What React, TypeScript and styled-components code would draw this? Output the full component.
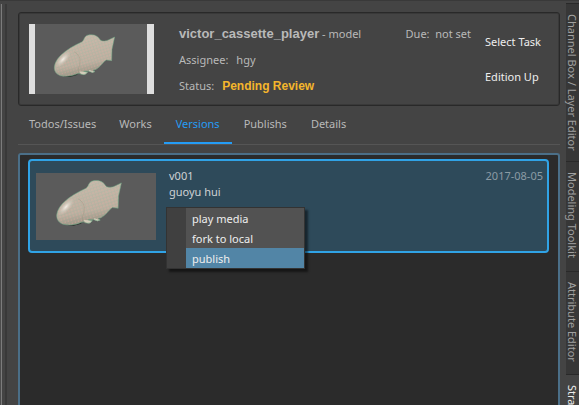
import React, { useState } from "react";
import styled, { createGlobalStyle } from "styled-components";

const GlobalStyle = createGlobalStyle`
  * { box-sizing: border-box; }
  body {
    margin: 0;
    background: #444444;
    color: #b9b9b9;
    font: 11px/16px "Noto Sans", "Open Sans", sans-serif;
  }
  button {
    font: inherit;
    color: inherit;
    background: none;
    border: 0;
    padding: 0;
    text-align: left;
    white-space: nowrap;
  }
  h1, h2, p, dl, dd, dt, ul { margin: 0; padding: 0; font: inherit; }
`;

const Window = styled.div`
  display: flex;
  height: 100vh;
  overflow: hidden;
  border-top: 1px solid #393939;
`;

const DockEdge = styled.div`
  flex: 0 0 7px;
  margin-top: 3px;
  border-left: 1px solid #4c4c4c;
  border-right: 2px solid #393939;
  box-shadow: inset 1px 0 #7c7c7c;
`;

const Main = styled.main`
  flex: 1;
  min-width: 0;
  display: flex;
  flex-direction: column;
  padding: 11px 6px 0 11px;
`;

const TaskCard = styled.section`
  display: flex;
  flex-shrink: 0;
  height: 94px;
  padding: 11px 10px;
  border: 1px solid #292929;
  border-radius: 3px;
  box-shadow: inset 0 0 0 1px #393939;
`;

const TaskThumb = styled.div`
  flex: 0 0 125px;
  height: 70px;
  border-left: 6px solid #dedede;
  border-right: 7px solid #dedede;
`;

const Picture = styled.svg`
  display: block;
  width: 100%;
  height: 100%;
`;

const TaskInfo = styled.div`
  flex: 1;
  min-width: 0;
  padding-left: 25px;
`;

const TitleRow = styled.div`
  display: flex;
  justify-content: space-between;
  height: 25px;
  padding-top: 2px;
  white-space: nowrap;
`;

const TaskName = styled.h1`
  strong {
    font: bold 13px/16px "Liberation Sans", Arial, sans-serif;
  }
`;

const Due = styled.p`
  padding-right: 14px;
  white-space: pre;
`;

const Field = styled.dl`
  display: flex;
  gap: 8px;
  height: 26px;
  padding-top: 3px;
`;

const Status = styled.dd`
  && { font: bold 12px/16px "Liberation Sans", Arial, sans-serif; }
  color: #f4b62c;
`;

const TaskActions = styled.div`
  flex: 0 0 64px;
  display: flex;
  flex-direction: column;
  gap: 19px;
  padding-top: 10px;
  color: #eeeeee;
`;

const Tabs = styled.div`
  display: flex;
  flex-shrink: 0;
  height: 39px;
  border-bottom: 1px solid #555555;
`;

const Tab = styled.button<{ $active: boolean }>`
  padding: 0 12px;
  color: ${(p) => (p.$active ? "#249cf5" : "#b9b9b9")};
  border-bottom: 2px solid ${(p) => (p.$active ? "#249cf5" : "transparent")};

  &:first-child { padding: 0 11px; }
`;

const VersionList = styled.section`
  flex: 1;
  margin-top: 8px;
  padding: 4px 9px 4px 8px;
  background: #2b2b2b;
  border: 2px solid #4b6f88;
  border-bottom: 0;
  border-radius: 3px 3px 0 0;
`;

const VersionCard = styled.article`
  position: relative;
  display: flex;
  height: 94px;
  padding: 12px 4px 0 6px;
  background: #2e4a5a;
  border: 2px solid #30a3e6;
  border-radius: 4px;
`;

const VersionThumb = styled.div`
  flex: 0 0 120px;
  height: 67px;
`;

const VersionText = styled.div`
  flex: 1;
  padding-left: 13px;
  margin-top: -5px;
  color: #cfd2d4;
`;

const VersionDate = styled.time`
  margin-top: -5px;
  color: #8b9ba4;
`;

const Menu = styled.div`
  position: absolute;
  left: 136px;
  top: 46px;
  width: 139px;
  padding-left: 19px;
  background: #404040;
  border: 1px solid #333333;
  box-shadow: 3px 3px 2px rgba(0, 0, 0, 0.5);
`;

const MenuItem = styled.button<{ $active: boolean }>`
  display: block;
  width: 100%;
  height: 20px;
  padding: 2px 0 0 6px;
  color: #eeeeee;
  background: ${(p) => (p.$active ? "#5285a6" : "#525252")};
`;

const SideTabs = styled.nav`
  flex: 0 0 13px;
  margin-top: 2px;
  display: flex;
  flex-direction: column;
  background: #373737;
`;

const SideTab = styled.button<{ $height: number; $active?: boolean }>`
  flex: 0 0 ${(p) => p.$height}px;
  writing-mode: vertical-rl;
  width: 13px;
  line-height: 13px;
  padding-top: 10px;
  color: ${(p) => (p.$active ? "#eeeeee" : "#a0a0a0")};
  background: ${(p) => (p.$active ? "#444444" : "#373737")};
  border-top: 1px solid #292929;
`;

function FishPicture() {
  const id = React.useId();
  const outline =
    "M58 134C57 122 64 106 78 93C95 77 117 64 140 54C146 51 146 43 151 38C155 33 161 32 169 32C182 32 190 38 196 48C202 53 213 51 220 48L239 39L231 76L230 110L214 108C206 112 198 127 186 134C182 137 178 138 174 139L180 143L172 145L162 142L146 142L158 145L150 151C144 153 137 151 132 148L123 151C110 157 90 158 76 155C65 151 59 144 58 134Z";
  return (
    <Picture viewBox="0 0 336 210" preserveAspectRatio="xMidYMid slice" role="img" aria-label="Fish model">
      <defs>
        <linearGradient id={id + "body"} x1="0.35" y1="0.1" x2="0.6" y2="1">
          <stop offset="0" stopColor="#c4baab" />
          <stop offset="0.65" stopColor="#bcb0a1" />
          <stop offset="1" stopColor="#938b7d" />
        </linearGradient>
        <radialGradient id={id + "shine"}>
          <stop offset="0" stopColor="#f4efe6" />
          <stop offset="1" stopColor="#cfc5b8" stopOpacity="0" />
        </radialGradient>
        <pattern id={id + "mesh"} width="9" height="9" patternUnits="userSpaceOnUse" patternTransform="rotate(-18)">
          <path d="M0 0H9M0 0V9" stroke="#83b591" strokeWidth="1.5" opacity="0.35" />
          <circle cx="5" cy="5" r="2" fill="#dfa99b" opacity="0.45" />
        </pattern>
      </defs>
      <rect width="336" height="210" fill="#5b5b5b" />
      <path d="M82 156L105 159L126 153L134 143L110 151ZM166 139L174 141L188 130Z" fill="#252b27" />
      <path d={outline} fill={`url(#${id}body)`} />
      <path d={outline} fill={`url(#${id}mesh)`} />
      <ellipse cx="84" cy="106" rx="13" ry="32" transform="rotate(43 84 106)" fill={`url(#${id}shine)`} />
      <path d="M117 83C132 91 138 104 134 121C131 134 127 141 132 146" fill="none" stroke="#918b75" strokeWidth="2" opacity="0.4" />
      <path d="M133 143C141 142 149 144 158 145L152 151C146 154 137 151 133 143M163 138L180 143L172 146L162 142" fill="#d3ccb9" />
      <path d={outline} fill="none" stroke="#68a482" strokeWidth="2" opacity="0.75" />
    </Picture>
  );
}

const tabNames = ["Todos/Issues", "Works", "Versions", "Publishs", "Details"];
const menuItems = ["play media", "fork to local", "publish"];

export default function App() {
  const [tab, setTab] = useState("Versions");
  return (
    <>
      <GlobalStyle />
      <Window>
        <DockEdge />
        <Main>
          <TaskCard>
            <TaskThumb><FishPicture /></TaskThumb>
            <TaskInfo>
              <TitleRow>
                <TaskName><strong>victor_cassette_player</strong> - model</TaskName>
                <Due>{"Due:  not set"}</Due>
              </TitleRow>
              <Field><dt>Assignee:</dt><dd>hgy</dd></Field>
              <Field><dt>Status:</dt><Status>Pending Review</Status></Field>
            </TaskInfo>
            <TaskActions>
              <button type="button">Select Task</button>
              <button type="button">Edition Up</button>
            </TaskActions>
          </TaskCard>
          <Tabs role="tablist">
            {tabNames.map((name) => (
              <Tab key={name} type="button" role="tab" aria-selected={tab === name} $active={tab === name} onClick={() => setTab(name)}>
                {name}
              </Tab>
            ))}
          </Tabs>
          <VersionList>
            <VersionCard>
              <VersionThumb><FishPicture /></VersionThumb>
              <VersionText>
                <h2>v001</h2>
                <p>guoyu hui</p>
              </VersionText>
              <VersionDate dateTime="2017-08-05">2017-08-05</VersionDate>
              <Menu role="menu">
                {menuItems.map((item) => (
                  <MenuItem key={item} type="button" role="menuitem" $active={item === "publish"}>{item}</MenuItem>
                ))}
              </Menu>
            </VersionCard>
          </VersionList>
        </Main>
        <SideTabs aria-label="Panels">
          <SideTab type="button" $height={158}>Channel Box / Layer Editor</SideTab>
          <SideTab type="button" $height={110}>Modeling Toolkit</SideTab>
          <SideTab type="button" $height={103}>Attribute Editor</SideTab>
          <SideTab type="button" $height={111} $active>Stra</SideTab>
        </SideTabs>
      </Window>
    </>
  );
}
